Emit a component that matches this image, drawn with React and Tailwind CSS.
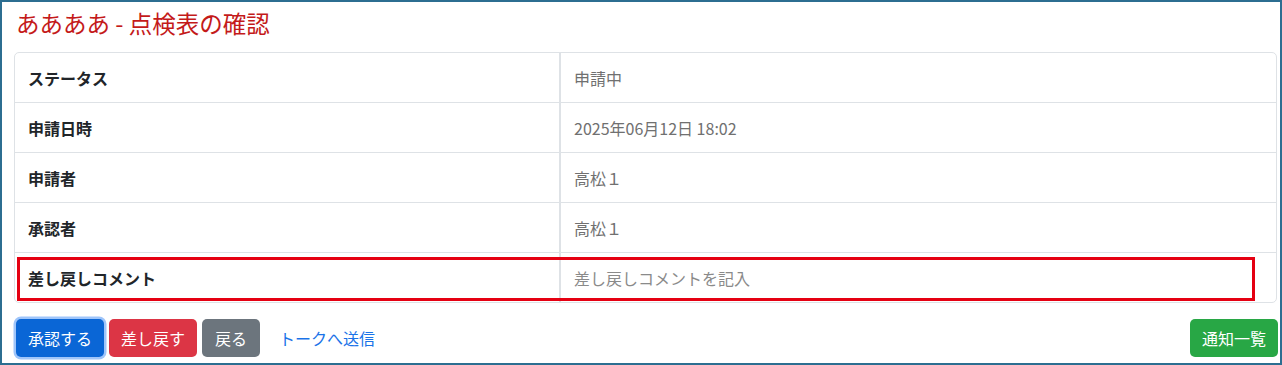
import React from "react";

const rows = [
  { label: "ステータス", value: "申請中" },
  { label: "申請日時", value: "2025年06月12日 18:02" },
  { label: "申請者", value: "高松１" },
  { label: "承認者", value: "高松１" },
];

export default function App() {
  return (
    <div className="w-[1282px] h-[365px] border-2 border-[#2c6e91] bg-white pl-3 pr-[2px] pt-[5px] font-['Hiragino_Sans','Noto_Sans_CJK_JP',sans-serif] overflow-hidden">
      {/* Title */}
      <h1 className="pl-[2px] text-[23.5px] leading-[32px] text-[#c41a1a]">ああああ - 点検表の確認</h1>

      {/* Detail table */}
      <div className="mt-[13px] w-[1263px] border border-[#dee2e6] rounded-[5px] text-[16px]">
        {rows.map((row) => (
          <div key={row.label} className="flex h-[50px] border-b border-[#dee2e6]">
            <div className="w-[546px] flex items-center pl-[13px] font-bold text-[#212529] border-r-2 border-[#dee2e6]">
              {row.label}
            </div>
            <div className="flex-1 flex items-center pl-[13px] text-[#707070]">{row.value}</div>
          </div>
        ))}
        <div className="relative flex h-[49px]">
          <div className="w-[546px] flex items-center pl-[13px] font-bold text-[#212529] border-r-2 border-[#dee2e6]">
            差し戻しコメント
          </div>
          <div className="flex-1 flex items-center pl-[13px] text-[#8a8a8a]">差し戻しコメントを記入</div>
          {/* highlight annotation */}
          <div className="absolute left-[2px] top-[4px] w-[1238px] h-[44px] border-[3px] border-[#e50012] pointer-events-none"></div>
        </div>
      </div>

      {/* Actions */}
      <div className="mt-[16px] flex items-center justify-between text-[16px]">
        <div className="flex items-center">
          <button className="ml-[2px] h-[38px] px-3 rounded-[5px] bg-[#0a66d6] text-white shadow-[0_0_0_2.5px_rgba(80,150,245,0.55)]">
            承認する
          </button>
          <button className="ml-[5px] h-[38px] px-3 rounded-[5px] bg-[#dc3545] text-white">差し戻す</button>
          <button className="ml-[5px] h-[38px] px-[13px] rounded-[5px] bg-[#6c757d] text-white">戻る</button>
          <button className="ml-[19px] h-[38px] text-[#1a73e8]">トークへ送信</button>
        </div>
        <button className="h-[38px] px-3 rounded-[5px] bg-[#28a745] text-white">通知一覧</button>
      </div>
    </div>
  );
}
